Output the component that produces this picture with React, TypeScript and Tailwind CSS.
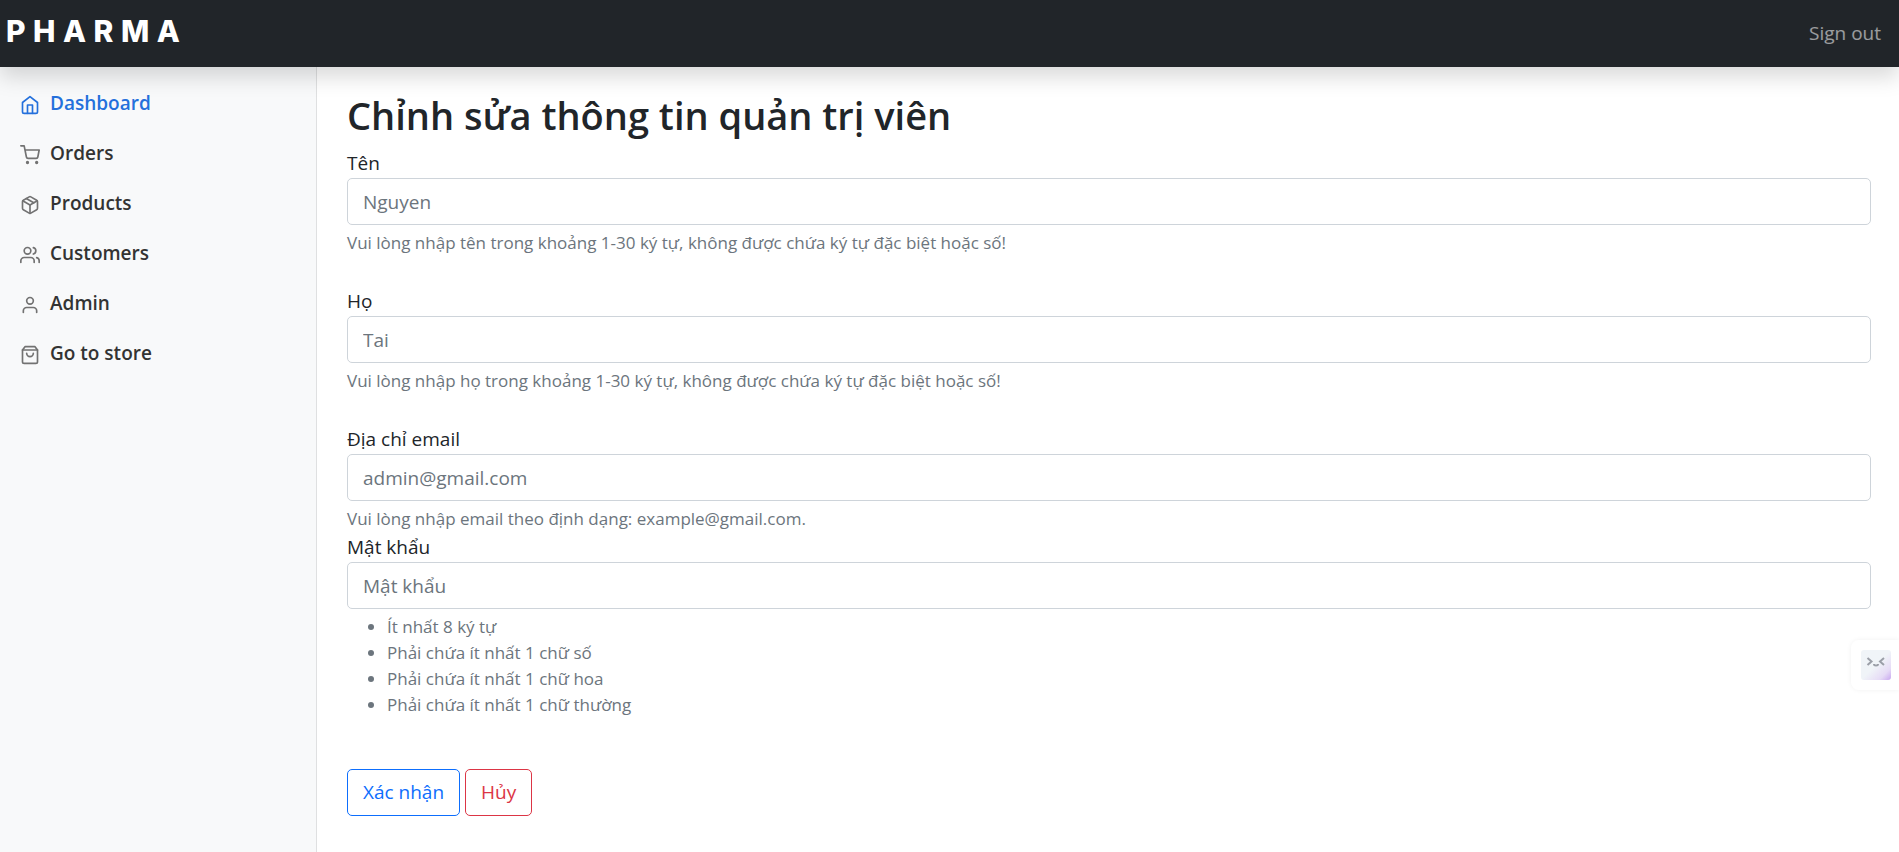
import type { ReactNode } from "react";

type NavItem = { label: string; icon: ReactNode; active?: boolean };

const NAV: NavItem[] = [
  {
    label: "Dashboard",
    active: true,
    icon: (
      <>
        <path d="M3 9l9-7 9 7v11a2 2 0 0 1-2 2H5a2 2 0 0 1-2-2z" />
        <polyline points="9 22 9 12 15 12 15 22" />
      </>
    ),
  },
  {
    label: "Orders",
    icon: (
      <>
        <circle cx="9" cy="21" r="1" />
        <circle cx="20" cy="21" r="1" />
        <path d="M1 1h4l2.68 13.39a2 2 0 0 0 2 1.61h9.72a2 2 0 0 0 2-1.61L23 6H6" />
      </>
    ),
  },
  {
    label: "Products",
    icon: (
      <>
        <line x1="16.5" y1="9.4" x2="7.5" y2="4.21" />
        <path d="M21 16V8a2 2 0 0 0-1-1.73l-7-4a2 2 0 0 0-2 0l-7 4A2 2 0 0 0 3 8v8a2 2 0 0 0 1 1.73l7 4a2 2 0 0 0 2 0l7-4A2 2 0 0 0 21 16z" />
        <polyline points="3.27 6.96 12 12.01 20.73 6.96" />
        <line x1="12" y1="22.08" x2="12" y2="12" />
      </>
    ),
  },
  {
    label: "Customers",
    icon: (
      <>
        <path d="M17 21v-2a4 4 0 0 0-4-4H5a4 4 0 0 0-4 4v2" />
        <circle cx="9" cy="7" r="4" />
        <path d="M23 21v-2a4 4 0 0 0-3-3.87" />
        <path d="M16 3.13a4 4 0 0 1 0 7.75" />
      </>
    ),
  },
  {
    label: "Admin",
    icon: (
      <>
        <path d="M20 21v-2a4 4 0 0 0-4-4H8a4 4 0 0 0-4 4v2" />
        <circle cx="12" cy="7" r="4" />
      </>
    ),
  },
  {
    label: "Go to store",
    icon: (
      <>
        <path d="M6 2L3 6v14a2 2 0 0 0 2 2h14a2 2 0 0 0 2-2V6l-3-4z" />
        <line x1="3" y1="6" x2="21" y2="6" />
        <path d="M16 10a4 4 0 0 1-8 0" />
      </>
    ),
  },
];

const PASSWORD_RULES = [
  "Ít nhất 8 ký tự",
  "Phải chứa ít nhất 1 chữ số",
  "Phải chứa ít nhất 1 chữ hoa",
  "Phải chứa ít nhất 1 chữ thường",
];

type FieldProps = {
  id: string;
  label: string;
  placeholder: string;
  type?: string;
  children: ReactNode;
};

function Field({ id, label, placeholder, type = "text", children }: FieldProps) {
  return (
    <div className="flex flex-col">
      <label htmlFor={id} className="self-start leading-[30px]">
        {label}
      </label>
      <input
        id={id}
        type={type}
        placeholder={placeholder}
        aria-describedby={`${id}-help`}
        className="h-[47px] w-full rounded-[5px] border border-[#ced4da] bg-white px-[15px] placeholder:text-[#6c757d]"
      />
      <div id={`${id}-help`} className="mt-[5px] text-[17px] leading-[26px] text-[#6c757d]">
        {children}
      </div>
    </div>
  );
}

export default function App() {
  return (
    <div className="flex min-h-screen flex-col bg-white font-['Open_Sans','Noto_Sans',sans-serif] text-[19px] text-[#212529]">
      <header className="relative z-10 flex h-[67px] items-center justify-between bg-[#212529] pr-[18px] pl-[6px] shadow-[0_10px_20px_rgba(0,0,0,0.15)]">
        <a
          href="#"
          className="pb-[5px] font-['Inter',sans-serif] text-[30px] leading-9 font-extrabold tracking-[0.25em] text-white"
        >
          PHARMA
        </a>
        <a href="#" className="text-white/55">
          Sign out
        </a>
      </header>

      <div className="flex flex-1">
        <nav className="w-[317px] shrink-0 border-r border-[#dfe0e1] bg-[#f8f9fa] pt-[11px]">
          <ul>
            {NAV.map(({ label, icon, active }) => (
              <li key={label}>
                <a
                  href="#"
                  className={`flex h-[50px] items-center gap-[10px] px-5 font-semibold ${
                    active ? "text-[#2470dc]" : "text-[#333333]"
                  }`}
                >
                  <svg
                    viewBox="0 0 24 24"
                    fill="none"
                    stroke="currentColor"
                    strokeWidth="2"
                    strokeLinecap="round"
                    strokeLinejoin="round"
                    aria-hidden="true"
                    className={`mt-1 size-5 ${active ? "" : "text-[#727272]"}`}
                  >
                    {icon}
                  </svg>
                  {label}
                </a>
              </li>
            ))}
          </ul>
        </nav>

        <main className="min-w-0 flex-1 pt-6 pr-7 pb-[30px] pl-[30px]">
          <h1 className="mb-[9px] text-[38px] leading-[48px] font-semibold">
            Chỉnh sửa thông tin quản trị viên
          </h1>
          <form>
            <div className="flex flex-col gap-[30px]">
              <Field id="first-name" label="Tên" placeholder="Nguyen">
                Vui lòng nhập tên trong khoảng 1-30 ký tự, không được chứa ký tự đặc biệt hoặc số!
              </Field>
              <Field id="last-name" label="Họ" placeholder="Tai">
                Vui lòng nhập họ trong khoảng 1-30 ký tự, không được chứa ký tự đặc biệt hoặc số!
              </Field>
              <Field id="email" type="email" label="Địa chỉ email" placeholder="admin@gmail.com">
                Vui lòng nhập email theo định dạng: example@gmail.com.
              </Field>
            </div>
            <Field id="password" type="password" label="Mật khẩu" placeholder="Mật khẩu">
              <ul className="list-disc pl-10">
                {PASSWORD_RULES.map((rule) => (
                  <li key={rule}>{rule}</li>
                ))}
              </ul>
            </Field>
            <div className="mt-[51px] flex gap-[5px]">
              <button
                type="submit"
                className="h-[47px] rounded-[5px] border border-[#0d6efd] px-[15px] text-[#0d6efd]"
              >
                Xác nhận
              </button>
              <button
                type="button"
                className="h-[47px] rounded-[5px] border border-[#dc3545] px-[15px] text-[#dc3545]"
              >
                Hủy
              </button>
            </div>
          </form>
        </main>
      </div>

      <button
        type="button"
        aria-label="Assistant"
        className="fixed top-[640px] right-0 z-20 flex h-[50px] w-12 items-center rounded-l-lg bg-white pl-[10px] shadow-[0_0_5px_rgba(0,0,0,0.06)]"
      >
        <svg viewBox="0 0 30 30" className="size-[30px]" aria-hidden="true">
          <defs>
            <linearGradient id="face" x1="0" y1="0" x2="1" y2="1">
              <stop offset="0.5" stopColor="#f0f4f8" />
              <stop offset="0.8" stopColor="#e6dbf6" />
              <stop offset="1" stopColor="#c8a6ef" />
            </linearGradient>
          </defs>
          <rect width="30" height="30" rx="3" fill="url(#face)" />
          <g fill="none" stroke="#9b9fa8" strokeWidth="2">
            <path d="M6.500 8l4 3.500-4 3.500M23 8l-4 3.500 4 3.500" />
            <path d="M13 14q0 1.500 2 1.500t2-1.500" />
          </g>
        </svg>
      </button>
    </div>
  );
}
